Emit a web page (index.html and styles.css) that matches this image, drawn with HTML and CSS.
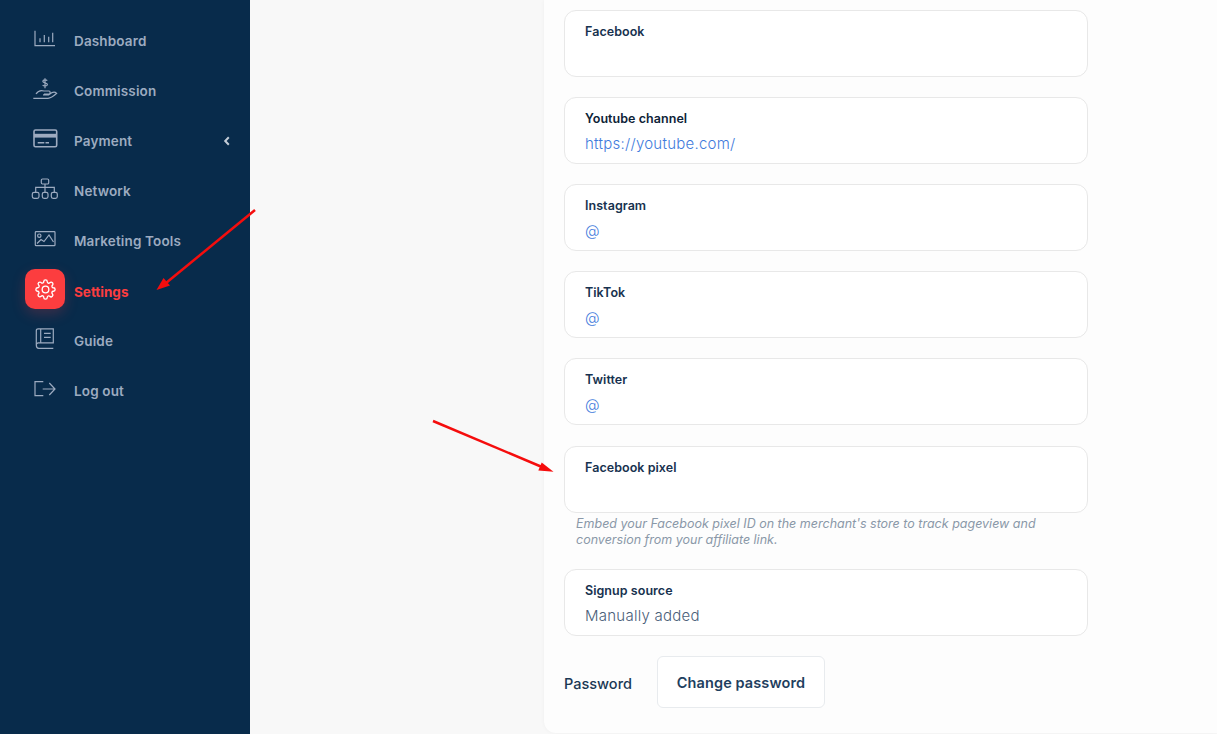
FILE: index.html
```html
<!DOCTYPE html>
<html lang="en">
<head>
<meta charset="utf-8">
<title>Settings</title>
<link rel="stylesheet" href="styles.css">
</head>
<body>
<div class="app">
  <nav class="sidebar">
    <a class="nav-item"><span class="nav-icon"><svg viewBox="0 0 28 24" class="ic"><path d="M4 3.700v15h20M9 15.300v-4M13.300 15.300V8M17.700 15.300V9.700M21.700 15.300V5.700"/></svg></span><span class="nav-label">Dashboard</span></a>
    <a class="nav-item"><span class="nav-icon"><svg viewBox="0 0 28 24" class="ic"><path d="M2.300 21.300H17c3 0 6-2.500 8.700-5-1.500-1.500-3.500-1.500-5-.5l-3 2H12M5 17c2-3 5-4 8-3h5c1.500 0 1.500 3 0 3h-5"/><path d="M16.200 3.600c-.6-1-4.200-1.300-4.400.6-.1 2 4.700 1.200 4.600 3.300-.2 2-3.900 1.700-4.800.5M14 1.300v10"/></svg></span><span class="nav-label">Commission</span></a>
    <a class="nav-item nav-item-sub"><span class="nav-icon"><svg viewBox="0 0 28 24" class="ic ic-card"><rect x="3" y="3" width="22.700" height="16.700" rx="1.500"/><path class="fill" d="M3 6.800h22.700v3.800H3z"/><path d="M6.700 15.700h6.600M14.500 15.700h3.500"/></svg></span><span class="nav-label">Payment</span><svg class="chev" viewBox="0 0 8 10"><path d="M5.800 1.200 2.200 5l3.600 3.800"/></svg></a>
    <a class="nav-item"><span class="nav-icon"><svg viewBox="0 0 28 24" class="ic"><rect x="10.300" y="2" width="7.400" height="5" rx="1.200"/><rect x="1.300" y="15.300" width="6.700" height="6" rx="1.800"/><rect x="11.300" y="15.300" width="5.700" height="6" rx="1.800"/><rect x="20.300" y="15.300" width="6" height="6" rx="1.800"/><path d="M14 7v8.300M4.700 15.300v-5h18.600v5"/></svg></span><span class="nav-label">Network</span></a>
    <a class="nav-item"><span class="nav-icon"><svg viewBox="0 0 28 24" class="ic"><rect x="4.300" y="4.700" width="19.700" height="14" rx=".8"/><circle cx="8.300" cy="8.700" r="1.700"/><path d="M6 16.500l4-4 3 2 5-6.500 4.500 7"/></svg></span><span class="nav-label">Marketing Tools</span></a>
    <a class="nav-item nav-item-active"><span class="nav-icon nav-icon-active"><svg viewBox="0 0 24 24" class="ic-white"><circle cx="12" cy="12" r="3.800"/><path d="M19.400 15a1.700 1.700 0 0 0 .3 1.800l.1.100a2 2 0 1 1-2.900 2.900l-.1-.1a1.700 1.700 0 0 0-2.800 1.200V21a2 2 0 1 1-4 0v-.1a1.700 1.700 0 0 0-2.900-1.200l-.1.100a2 2 0 1 1-2.900-2.900l.1-.1a1.700 1.700 0 0 0-1.200-2.800H3a2 2 0 1 1 0-4h.1a1.700 1.700 0 0 0 1.200-2.900l-.1-.1a2 2 0 1 1 2.900-2.900l.1.100a1.700 1.700 0 0 0 1.800.3H9a1.700 1.700 0 0 0 1-1.500V3a2 2 0 1 1 4 0v.1a1.700 1.700 0 0 0 2.900 1.200l.1-.1a2 2 0 1 1 2.900 2.900l-.1.100a1.700 1.700 0 0 0-.3 1.800V9a1.700 1.700 0 0 0 1.500 1H21a2 2 0 1 1 0 4h-.1a1.700 1.700 0 0 0-1.500 1z"/></svg></span><span class="nav-label nav-label-active">Settings</span></a>
    <a class="nav-item"><span class="nav-icon"><svg viewBox="0 0 28 24" class="ic"><path d="M5.300 18V3.500c0-1 .8-1.700 1.800-1.700h15.200v14H7.300c-1.200 0-2 .9-2 2.200 0 1.700 1 3.300 2.500 3.300h14.500M9.700 1.800v14M13 6.300h6.700M13 10.300h6.700"/></svg></span><span class="nav-label">Guide</span></a>
    <a class="nav-item"><span class="nav-icon"><svg viewBox="0 0 28 24" class="ic"><path d="M12.300 4.700H4v14h8.300M11.700 12H24M18.300 6 24 12l-5.700 6"/></svg></span><span class="nav-label">Log out</span></a>
  </nav>
  <main class="content">
    <section class="card">
      <div class="field"><span class="field-label">Facebook</span></div>
      <div class="field"><span class="field-label label-dark">Youtube channel</span><span class="field-value value-link">https://youtube.com/</span></div>
      <div class="field"><span class="field-label">Instagram</span><span class="field-value value-at">@</span></div>
      <div class="field"><span class="field-label">TikTok</span><span class="field-value value-at">@</span></div>
      <div class="field"><span class="field-label">Twitter</span><span class="field-value value-at">@</span></div>
      <div class="field field-pixel"><span class="field-label">Facebook pixel</span></div>
      <p class="help">Embed your Facebook pixel ID on the merchant's store to track pageview and conversion from your affiliate link.</p>
      <div class="field"><span class="field-label">Signup source</span><span class="field-value">Manually added</span></div>
      <div class="password-row"><span class="password-label">Password</span><button class="password-btn" type="button">Change password</button></div>
    </section>
  </main>
</div>
<svg class="arrows" viewBox="0 0 1217 734" aria-hidden="true">
  <path class="arrow-line" d="M255 210 166 283"/>
  <path class="arrow-head" d="M156.500 290 163.500 278 170 285.500z"/>
  <path class="arrow-line" d="M433 421 542 467"/>
  <path class="arrow-head" d="M553.500 471.700 541.700 462.500 538.300 470.500z"/>
</svg>
</body>
</html>
```
FILE: styles.css
```css
* { box-sizing: border-box; }
html, body { margin: 0; height: 100%; overflow: hidden; }
body { font-family: "Inter", "Open Sans", sans-serif; background: #f8f8f8; color: #0b2b4b; }
.app { display: flex; height: 734px; }
.sidebar { width: 250px; flex: none; background: #082b4b; padding: 14px 0 0 25px; display: flex; flex-direction: column; }
.nav-item { height: 50px; display: flex; align-items: center; gap: 9px; color: #9dabc0; font-size: 13.5px; font-weight: 600; letter-spacing: .15px; }
.nav-item-sub { padding-right: 19px; }
.nav-icon { width: 40px; height: 40px; flex: none; display: flex; align-items: center; justify-content: center; border-radius: 10px; }
.nav-icon-active { background: #fc3d3f; box-shadow: 0 5px 14px rgba(252, 61, 63, .22); }
.nav-label { padding-top: 4px; flex: 1; }
.nav-label-active { padding-top: 5px; }
.nav-item-active { color: #fc3d3f; font-weight: 700; letter-spacing: 0; }
.ic { width: 28px; height: 24px; flex: none; fill: none; stroke: #9dabc0; stroke-width: 1.2; }
.ic-card { stroke-width: 1.6; }
.ic-white { width: 21px; height: 21px; fill: none; stroke: #fff; stroke-width: 1.5; }
.fill { fill: #9dabc0; stroke: none; }
.chev { width: 8px; height: 10px; margin-top: 4px; fill: none; stroke: #c3ccd7; stroke-width: 2; }
.content { flex: 1; min-width: 0; padding-left: 294px; }
.card { height: 733px; background: #fdfdfd; border-bottom-left-radius: 12px; padding: 10px 129px 0 20px; box-shadow: 0 0 4px rgba(0, 0, 0, .04); }
.field { height: 67px; margin-bottom: 20px; padding: 13px 20px 0; background: #fff; border: 1px solid #e8e8e8; border-radius: 12px; display: flex; flex-direction: column; }
.field-pixel { margin-top: 21px; margin-bottom: 3px; }
.field-label { font-size: 12.5px; font-weight: 600; line-height: 15px; letter-spacing: .05px; color: #17324f; }
.label-dark { color: #0d2237; }
.field-value { margin-top: 7px; font-size: 15px; line-height: 22px; font-weight: 350; letter-spacing: .25px; color: #4a6079; }
.value-link, .value-at { color: #3f7bdc; }
.help { margin: 0 0 21px 12px; font-size: 12.5px; line-height: 16px; font-style: italic; color: #8a98a8; width: 480px; }
.password-row { display: flex; align-items: center; gap: 25px; }
.password-label { font-size: 14.5px; font-weight: 500; color: #1a3854; padding-top: 2px; }
.password-btn { width: 168px; height: 52px; padding: 0; background: #fff; border: 1px solid #e8ebee; border-radius: 6px; font: 600 14.5px "Inter", sans-serif; letter-spacing: .1px; color: #1f3f5f; }
.arrows { position: absolute; left: 0; top: 0; width: 1217px; height: 734px; pointer-events: none; }
.arrow-line { stroke: #f50d0d; stroke-width: 2.5; fill: none; }
.arrow-head { fill: #f50d0d; }
```
